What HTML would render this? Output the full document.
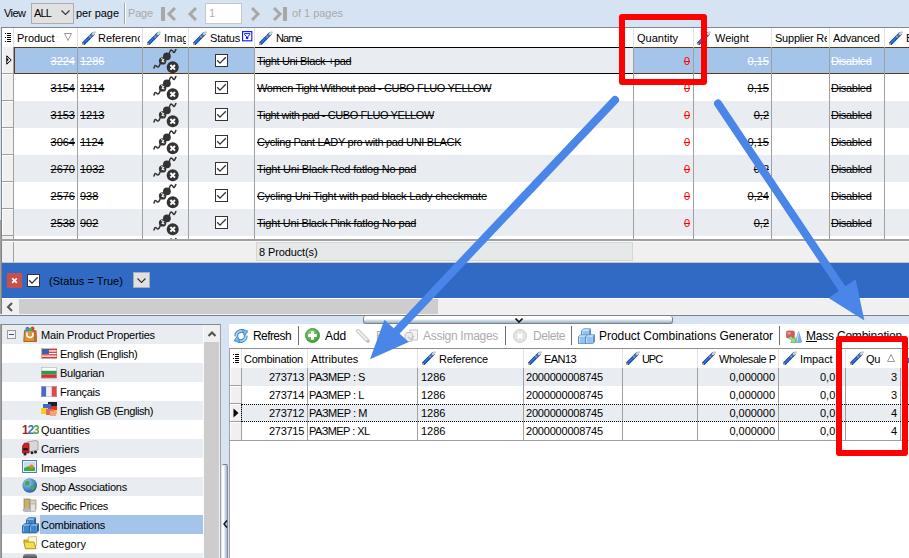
<!DOCTYPE html><html><head><meta charset="utf-8"><style>html,body{margin:0;padding:0;}body{width:909px;height:558px;overflow:hidden;position:relative;background:#fff;font-family:"Liberation Sans",sans-serif;}.a{position:absolute;}.t{font-family:"Liberation Sans",sans-serif;line-height:13px;white-space:nowrap;}</style></head><body><div class="a" style="left:0px;top:0px;width:909px;height:27px;background:#d6e3f2"></div>
<div class="a t" style="top:7px;font-size:11px;color:#000;letter-spacing:-0.535px;left:4px;">View</div>
<div class="a" style="left:31px;top:3px;width:43px;height:21px;background:#e1e1e1;border:1px solid #adadad;box-sizing:border-box"></div>
<div class="a t" style="top:7px;font-size:11px;color:#000;letter-spacing:-0.865px;left:34px;">ALL</div>
<svg class="a" style="left:61px;top:10px;" width="9" height="6" viewBox="0 0 9 6"><path d="M0.5 0.5 L4.5 4.5 L8.5 0.5" fill="none" stroke="#333" stroke-width="1.1"/></svg>
<div class="a t" style="top:7px;font-size:11px;color:#000;letter-spacing:-0.059px;left:76px;">per page</div>
<div class="a" style="left:124px;top:3px;width:1px;height:21px;background:#a8a8a8"></div>
<div class="a" style="left:125px;top:3px;width:1px;height:21px;background:#ffffff"></div>
<div class="a t" style="top:7px;font-size:11px;color:#aaaaaa;letter-spacing:-0.180px;left:128px;">Page</div>
<div class="a" style="left:161px;top:7px;width:4px;height:14px;background:#a8a8a8"></div>
<svg class="a" style="left:166px;top:7px;" width="10" height="14" viewBox="0 0 10 14"><path d="M9 1 L3 7 L9 13" fill="none" stroke="#a8a8a8" stroke-width="3"/></svg>
<svg class="a" style="left:187px;top:7px;" width="10" height="14" viewBox="0 0 10 14"><path d="M9 1 L3 7 L9 13" fill="none" stroke="#a8a8a8" stroke-width="3"/></svg>
<div class="a" style="left:205px;top:3px;width:37px;height:21px;background:#fff;border:1px solid #c8c8c8;box-sizing:border-box"></div>
<div class="a t" style="top:7px;font-size:11px;color:#b0b0b0;left:209px;">1</div>
<svg class="a" style="left:251px;top:7px;" width="10" height="14" viewBox="0 0 10 14"><path d="M1 1 L7 7 L1 13" fill="none" stroke="#a8a8a8" stroke-width="3"/></svg>
<svg class="a" style="left:273px;top:7px;" width="10" height="14" viewBox="0 0 10 14"><path d="M1 1 L7 7 L1 13" fill="none" stroke="#a8a8a8" stroke-width="3"/></svg>
<div class="a" style="left:283px;top:7px;width:4px;height:14px;background:#a8a8a8"></div>
<div class="a t" style="top:7px;font-size:11px;color:#aaaaaa;letter-spacing:-0.044px;left:292px;">of 1 pages</div>
<div class="a" style="left:0px;top:27px;width:909px;height:1px;background:#7f8893"></div>
<div class="a" style="left:1px;top:28px;width:908px;height:211px;background:#fff"></div>
<div class="a" style="left:1px;top:27px;width:1px;height:290px;background:#7d838a"></div>
<div class="a" style="left:0px;top:27px;width:1px;height:193px;background:#d6e3f2"></div>
<div class="a" style="left:0px;top:220px;width:1px;height:338px;background:#a0a0a0"></div>
<div class="a" style="left:13px;top:28px;width:1px;height:19px;background:#e2e2e2"></div>
<div class="a" style="left:77px;top:28px;width:1px;height:19px;background:#e2e2e2"></div>
<div class="a" style="left:142px;top:28px;width:1px;height:19px;background:#e2e2e2"></div>
<div class="a" style="left:188px;top:28px;width:1px;height:19px;background:#e2e2e2"></div>
<div class="a" style="left:254px;top:28px;width:1px;height:19px;background:#e2e2e2"></div>
<div class="a" style="left:633px;top:28px;width:1px;height:19px;background:#e2e2e2"></div>
<div class="a" style="left:693px;top:28px;width:1px;height:19px;background:#e2e2e2"></div>
<div class="a" style="left:771px;top:28px;width:1px;height:19px;background:#e2e2e2"></div>
<div class="a" style="left:829px;top:28px;width:1px;height:19px;background:#e2e2e2"></div>
<div class="a" style="left:884px;top:28px;width:1px;height:19px;background:#e2e2e2"></div>
<div class="a" style="left:2px;top:47px;width:907px;height:27px;background:#e9edf2"></div>
<div class="a" style="left:2px;top:47px;width:11px;height:27px;background:#f0f0f0"></div>
<div class="a" style="left:2px;top:74px;width:907px;height:27px;background:#fff"></div>
<div class="a" style="left:2px;top:74px;width:11px;height:27px;background:#f0f0f0"></div>
<div class="a" style="left:2px;top:101px;width:907px;height:27px;background:#e9edf2"></div>
<div class="a" style="left:2px;top:101px;width:11px;height:27px;background:#f0f0f0"></div>
<div class="a" style="left:2px;top:128px;width:907px;height:27px;background:#fff"></div>
<div class="a" style="left:2px;top:128px;width:11px;height:27px;background:#f0f0f0"></div>
<div class="a" style="left:2px;top:155px;width:907px;height:27px;background:#e9edf2"></div>
<div class="a" style="left:2px;top:155px;width:11px;height:27px;background:#f0f0f0"></div>
<div class="a" style="left:2px;top:182px;width:907px;height:27px;background:#fff"></div>
<div class="a" style="left:2px;top:182px;width:11px;height:27px;background:#f0f0f0"></div>
<div class="a" style="left:2px;top:209px;width:907px;height:27px;background:#e9edf2"></div>
<div class="a" style="left:2px;top:209px;width:11px;height:27px;background:#f0f0f0"></div>
<div class="a" style="left:2px;top:236px;width:907px;height:3px;background:#fff"></div>
<div class="a" style="left:2px;top:236px;width:11px;height:3px;background:#f0f0f0"></div>
<div class="a" style="left:14px;top:47px;width:619px;height:27px;background:#a5c4ea"></div>
<div class="a" style="left:634px;top:47px;width:275px;height:27px;background:#a5c4ea"></div>
<div class="a" style="left:254px;top:47px;width:379px;height:27px;background:#e9edf2"></div>
<div class="a" style="left:14px;top:47px;width:240px;height:1px;background:#5e3c12"></div>
<div class="a" style="left:14px;top:73px;width:240px;height:1px;background:#5e3c12"></div>
<div class="a" style="left:254px;top:47px;width:379px;height:1px;background:#000"></div>
<div class="a" style="left:254px;top:73px;width:379px;height:1px;background:#000"></div>
<div class="a" style="left:634px;top:47px;width:275px;height:1px;background:#5e3c12"></div>
<div class="a" style="left:634px;top:73px;width:275px;height:1px;background:#5e3c12"></div>
<div class="a" style="left:2px;top:47px;width:1px;height:26px;background:#ffffff"></div>
<div class="a" style="left:2px;top:73px;width:11px;height:1px;background:#a0a0a0"></div>
<div class="a" style="left:2px;top:74px;width:11px;height:1px;background:#ffffff"></div>
<div class="a" style="left:2px;top:74px;width:1px;height:26px;background:#ffffff"></div>
<div class="a" style="left:2px;top:100px;width:11px;height:1px;background:#a0a0a0"></div>
<div class="a" style="left:2px;top:101px;width:11px;height:1px;background:#ffffff"></div>
<div class="a" style="left:2px;top:101px;width:1px;height:26px;background:#ffffff"></div>
<div class="a" style="left:2px;top:127px;width:11px;height:1px;background:#a0a0a0"></div>
<div class="a" style="left:2px;top:128px;width:11px;height:1px;background:#ffffff"></div>
<div class="a" style="left:2px;top:128px;width:1px;height:26px;background:#ffffff"></div>
<div class="a" style="left:2px;top:154px;width:11px;height:1px;background:#a0a0a0"></div>
<div class="a" style="left:2px;top:155px;width:11px;height:1px;background:#ffffff"></div>
<div class="a" style="left:2px;top:155px;width:1px;height:26px;background:#ffffff"></div>
<div class="a" style="left:2px;top:181px;width:11px;height:1px;background:#a0a0a0"></div>
<div class="a" style="left:2px;top:182px;width:11px;height:1px;background:#ffffff"></div>
<div class="a" style="left:2px;top:182px;width:1px;height:26px;background:#ffffff"></div>
<div class="a" style="left:2px;top:208px;width:11px;height:1px;background:#a0a0a0"></div>
<div class="a" style="left:2px;top:209px;width:11px;height:1px;background:#ffffff"></div>
<div class="a" style="left:2px;top:209px;width:1px;height:26px;background:#ffffff"></div>
<div class="a" style="left:2px;top:235px;width:11px;height:1px;background:#a0a0a0"></div>
<div class="a" style="left:2px;top:236px;width:11px;height:1px;background:#ffffff"></div>
<div class="a" style="left:2px;top:236px;width:1px;height:3px;background:#ffffff"></div>
<div class="a" style="left:2px;top:236px;width:907px;height:3px;background:#fff"></div>
<div class="a" style="left:2px;top:236px;width:11px;height:3px;background:#f0f0f0"></div>
<div class="a" style="left:13px;top:47px;width:1px;height:192px;background:#a0a0a0"></div>
<div class="a" style="left:77px;top:47px;width:1px;height:192px;background:#a0a0a0"></div>
<div class="a" style="left:142px;top:47px;width:1px;height:192px;background:#a0a0a0"></div>
<div class="a" style="left:188px;top:47px;width:1px;height:192px;background:#a0a0a0"></div>
<div class="a" style="left:254px;top:47px;width:1px;height:192px;background:#a0a0a0"></div>
<div class="a" style="left:633px;top:47px;width:1px;height:192px;background:#a0a0a0"></div>
<div class="a" style="left:693px;top:47px;width:1px;height:192px;background:#a0a0a0"></div>
<div class="a" style="left:771px;top:47px;width:1px;height:192px;background:#a0a0a0"></div>
<div class="a" style="left:829px;top:47px;width:1px;height:192px;background:#a0a0a0"></div>
<div class="a" style="left:884px;top:47px;width:1px;height:192px;background:#a0a0a0"></div>
<div class="a" style="left:14px;top:47px;width:1px;height:27px;background:#5e3c12"></div>
<div class="a" style="left:1px;top:239px;width:908px;height:2px;background:#a0a0a0"></div>
<div class="a" style="left:2px;top:241px;width:907px;height:1px;background:#fafafa"></div>
<div class="a t" style="top:32px;font-size:11px;color:#000;letter-spacing:-0.062px;left:17px;">Product</div>
<div class="a t" style="top:32px;font-size:11px;color:#f8dcb0;left:56px;">:</div>
<svg class="a" style="left:64px;top:33px;" width="8" height="8" viewBox="0 0 8 8"><path d="M0.5 0.5 H7.5 L4 7.5 Z" fill="none" stroke="#9a9a9a" stroke-width="1"/></svg>
<svg class="a" style="left:82px;top:31px;" width="14" height="14" viewBox="0 0 14 14"><path d="M1.8 12.2 L11.2 2.8" stroke="#0a3fa8" stroke-width="3.4" stroke-linecap="round"/><path d="M2.2 11.6 L10.6 3.2" stroke="#2b7ae6" stroke-width="1.6" stroke-linecap="round"/><path d="M7.6 6.2 L8.8 5.0" stroke="#b89060" stroke-width="2.6"/><path d="M11.0 3.0 L12.6 1.4" stroke="#cfcfc8" stroke-width="2.6" stroke-linecap="round"/><circle cx="1.0" cy="13.0" r="1.0" fill="#f0b030"/></svg>
<div class="a t" style="top:32px;font-size:11px;color:#000;left:98px;width:42px;overflow:hidden;">Referenc</div>
<svg class="a" style="left:147px;top:31px;" width="14" height="14" viewBox="0 0 14 14"><path d="M1.8 12.2 L11.2 2.8" stroke="#0a3fa8" stroke-width="3.4" stroke-linecap="round"/><path d="M2.2 11.6 L10.6 3.2" stroke="#2b7ae6" stroke-width="1.6" stroke-linecap="round"/><path d="M7.6 6.2 L8.8 5.0" stroke="#b89060" stroke-width="2.6"/><path d="M11.0 3.0 L12.6 1.4" stroke="#cfcfc8" stroke-width="2.6" stroke-linecap="round"/><circle cx="1.0" cy="13.0" r="1.0" fill="#f0b030"/></svg>
<div class="a t" style="top:32px;font-size:11px;color:#000;left:164px;width:22px;overflow:hidden;">Imag</div>
<svg class="a" style="left:193px;top:31px;" width="14" height="14" viewBox="0 0 14 14"><path d="M1.8 12.2 L11.2 2.8" stroke="#0a3fa8" stroke-width="3.4" stroke-linecap="round"/><path d="M2.2 11.6 L10.6 3.2" stroke="#2b7ae6" stroke-width="1.6" stroke-linecap="round"/><path d="M7.6 6.2 L8.8 5.0" stroke="#b89060" stroke-width="2.6"/><path d="M11.0 3.0 L12.6 1.4" stroke="#cfcfc8" stroke-width="2.6" stroke-linecap="round"/><circle cx="1.0" cy="13.0" r="1.0" fill="#f0b030"/></svg>
<div class="a t" style="top:32px;font-size:11px;color:#000;letter-spacing:-0.203px;left:210px;">Status</div>
<svg class="a" style="left:242px;top:31px;" width="11" height="11" viewBox="0 0 11 11"><rect x="0.6" y="0.6" width="9.2" height="9.2" fill="#fff" stroke="#0a14ff" stroke-width="1.1"/><path d="M2.5 2.6 H7.9 V3.6 L5.9 5.4 V7.6 H4.5 V5.4 L2.5 3.6 Z" fill="none" stroke="#0a14ff" stroke-width="1"/><rect x="4.6" y="6" width="1.3" height="1.8" fill="#0a14ff"/></svg>
<svg class="a" style="left:259px;top:31px;" width="14" height="14" viewBox="0 0 14 14"><path d="M1.8 12.2 L11.2 2.8" stroke="#0a3fa8" stroke-width="3.4" stroke-linecap="round"/><path d="M2.2 11.6 L10.6 3.2" stroke="#2b7ae6" stroke-width="1.6" stroke-linecap="round"/><path d="M7.6 6.2 L8.8 5.0" stroke="#b89060" stroke-width="2.6"/><path d="M11.0 3.0 L12.6 1.4" stroke="#cfcfc8" stroke-width="2.6" stroke-linecap="round"/><circle cx="1.0" cy="13.0" r="1.0" fill="#f0b030"/></svg>
<div class="a t" style="top:32px;font-size:11px;color:#000;letter-spacing:-0.961px;left:276px;">Name</div>
<div class="a t" style="top:32px;font-size:11px;color:#000;left:637px;">Quantity</div>
<svg class="a" style="left:697px;top:31px;" width="14" height="14" viewBox="0 0 14 14"><path d="M1.8 12.2 L11.2 2.8" stroke="#0a3fa8" stroke-width="3.4" stroke-linecap="round"/><path d="M2.2 11.6 L10.6 3.2" stroke="#2b7ae6" stroke-width="1.6" stroke-linecap="round"/><path d="M7.6 6.2 L8.8 5.0" stroke="#b89060" stroke-width="2.6"/><path d="M11.0 3.0 L12.6 1.4" stroke="#cfcfc8" stroke-width="2.6" stroke-linecap="round"/><circle cx="1.0" cy="13.0" r="1.0" fill="#f0b030"/></svg>
<div class="a t" style="top:32px;font-size:11px;color:#000;letter-spacing:-0.058px;left:715px;">Weight</div>
<div class="a t" style="top:32px;font-size:11px;color:#000;letter-spacing:-0.227px;left:775px;width:52px;overflow:hidden;">Supplier Re</div>
<div class="a t" style="top:32px;font-size:11px;color:#000;letter-spacing:-0.309px;left:833px;">Advanced</div>
<svg class="a" style="left:889px;top:31px;" width="14" height="14" viewBox="0 0 14 14"><path d="M1.8 12.2 L11.2 2.8" stroke="#0a3fa8" stroke-width="3.4" stroke-linecap="round"/><path d="M2.2 11.6 L10.6 3.2" stroke="#2b7ae6" stroke-width="1.6" stroke-linecap="round"/><path d="M7.6 6.2 L8.8 5.0" stroke="#b89060" stroke-width="2.6"/><path d="M11.0 3.0 L12.6 1.4" stroke="#cfcfc8" stroke-width="2.6" stroke-linecap="round"/><circle cx="1.0" cy="13.0" r="1.0" fill="#f0b030"/></svg>
<div class="a t" style="top:32px;font-size:11px;color:#000;left:906px;width:3px;overflow:hidden;">B</div>
<svg class="a" style="left:6px;top:55px;" width="7" height="11" viewBox="0 0 7 11"><path d="M0.8 0.8 L5.2 5 L0.8 9.2 Z" fill="none" stroke="#000" stroke-width="1"/><rect x="0.8" y="3.6" width="1.6" height="2" fill="#000"/></svg>
<svg class="a" style="left:5px;top:33px;" width="7" height="10" viewBox="0 0 7 10"><g fill="#000" shape-rendering="crispEdges"><rect x="0" y="0" width="1" height="1"/><rect x="0" y="4" width="1" height="1"/><rect x="0" y="8" width="1" height="1"/><rect x="2" y="0" width="4" height="1"/><rect x="2" y="2" width="4" height="1"/><rect x="2" y="4" width="4" height="1"/><rect x="2" y="6" width="4" height="1"/><rect x="2" y="8" width="4" height="1"/></g></svg>
<div class="a t" style="top:55px;font-size:11px;color:#fff;right:834px;text-align:right;text-decoration:line-through;">3224</div>
<div class="a t" style="top:55px;font-size:11px;color:#fff;left:80px;text-decoration:line-through;">1286</div>
<svg class="a" style="left:150px;top:47px;" width="32" height="27" viewBox="0 0 32 27"><path d="M19.3 6.8 C19.6 4.4 20.6 2.6 21.9 3.3 C23.2 4.0 23.1 5.9 24.3 5.3 C25.3 4.8 25.2 3.3 25.9 2.6" fill="none" stroke="#333" stroke-width="1.5" stroke-linecap="round"/><path d="M10.2 16.8 C9.6 18.6 8.6 20.6 7.3 19.9 C6.2 19.3 6.0 18.0 5.0 18.6 C4.2 19.1 4.6 20.4 4.0 20.9" fill="none" stroke="#333" stroke-width="1.5" stroke-linecap="round"/><circle cx="16.9" cy="9.3" r="3.9" fill="#333"/><circle cx="12.6" cy="13.9" r="3.7" fill="#333"/><path d="M11.2 11.6 L13.6 12.6 L12.2 14.2 L14.4 15.0" fill="none" stroke="#fff" stroke-width="1.1"/><circle cx="22.7" cy="20.3" r="6.0" fill="#333"/><path d="M20.4 18.0 L25.0 22.6 M25.0 18.0 L20.4 22.6" stroke="#fff" stroke-width="2.0"/></svg>
<svg class="a" style="left:215px;top:54px;" width="13" height="13" viewBox="0 0 13 13"><rect x="0.5" y="0.5" width="12" height="12" fill="#fff" stroke="#333"/><path d="M2.2 6.2 L5.0 9.1 L10.8 3.3" fill="none" stroke="#333" stroke-width="1.3"/></svg>
<div class="a t" style="top:55px;font-size:11px;color:#000;letter-spacing:-0.358px;left:257px;text-decoration:line-through;">Tight Uni Black +pad</div>
<div class="a t" style="top:55px;font-size:11px;color:#f00;right:219px;text-align:right;text-decoration:line-through;">0</div>
<div class="a t" style="top:55px;font-size:11px;color:#fff;right:140px;text-align:right;text-decoration:line-through;">0,15</div>
<div class="a t" style="top:55px;font-size:11px;color:#fff;letter-spacing:-0.289px;left:831px;text-decoration:line-through;">Disabled</div>
<div class="a t" style="top:82px;font-size:11px;color:#000;right:834px;text-align:right;text-decoration:line-through;">3154</div>
<div class="a t" style="top:82px;font-size:11px;color:#000;left:80px;text-decoration:line-through;">1214</div>
<svg class="a" style="left:150px;top:74px;" width="32" height="27" viewBox="0 0 32 27"><path d="M19.3 6.8 C19.6 4.4 20.6 2.6 21.9 3.3 C23.2 4.0 23.1 5.9 24.3 5.3 C25.3 4.8 25.2 3.3 25.9 2.6" fill="none" stroke="#333" stroke-width="1.5" stroke-linecap="round"/><path d="M10.2 16.8 C9.6 18.6 8.6 20.6 7.3 19.9 C6.2 19.3 6.0 18.0 5.0 18.6 C4.2 19.1 4.6 20.4 4.0 20.9" fill="none" stroke="#333" stroke-width="1.5" stroke-linecap="round"/><circle cx="16.9" cy="9.3" r="3.9" fill="#333"/><circle cx="12.6" cy="13.9" r="3.7" fill="#333"/><path d="M11.2 11.6 L13.6 12.6 L12.2 14.2 L14.4 15.0" fill="none" stroke="#fff" stroke-width="1.1"/><circle cx="22.7" cy="20.3" r="6.0" fill="#333"/><path d="M20.4 18.0 L25.0 22.6 M25.0 18.0 L20.4 22.6" stroke="#fff" stroke-width="2.0"/></svg>
<svg class="a" style="left:215px;top:81px;" width="13" height="13" viewBox="0 0 13 13"><rect x="0.5" y="0.5" width="12" height="12" fill="#fff" stroke="#333"/><path d="M2.2 6.2 L5.0 9.1 L10.8 3.3" fill="none" stroke="#333" stroke-width="1.3"/></svg>
<div class="a t" style="top:82px;font-size:11px;color:#000;letter-spacing:-0.353px;left:257px;text-decoration:line-through;">Women Tight Without pad - CUBO FLUO YELLOW</div>
<div class="a t" style="top:82px;font-size:11px;color:#f00;right:219px;text-align:right;text-decoration:line-through;">0</div>
<div class="a t" style="top:82px;font-size:11px;color:#000;right:140px;text-align:right;text-decoration:line-through;">0,15</div>
<div class="a t" style="top:82px;font-size:11px;color:#000;letter-spacing:-0.289px;left:831px;text-decoration:line-through;">Disabled</div>
<div class="a t" style="top:109px;font-size:11px;color:#000;right:834px;text-align:right;text-decoration:line-through;">3153</div>
<div class="a t" style="top:109px;font-size:11px;color:#000;left:80px;text-decoration:line-through;">1213</div>
<svg class="a" style="left:150px;top:101px;" width="32" height="27" viewBox="0 0 32 27"><path d="M19.3 6.8 C19.6 4.4 20.6 2.6 21.9 3.3 C23.2 4.0 23.1 5.9 24.3 5.3 C25.3 4.8 25.2 3.3 25.9 2.6" fill="none" stroke="#333" stroke-width="1.5" stroke-linecap="round"/><path d="M10.2 16.8 C9.6 18.6 8.6 20.6 7.3 19.9 C6.2 19.3 6.0 18.0 5.0 18.6 C4.2 19.1 4.6 20.4 4.0 20.9" fill="none" stroke="#333" stroke-width="1.5" stroke-linecap="round"/><circle cx="16.9" cy="9.3" r="3.9" fill="#333"/><circle cx="12.6" cy="13.9" r="3.7" fill="#333"/><path d="M11.2 11.6 L13.6 12.6 L12.2 14.2 L14.4 15.0" fill="none" stroke="#fff" stroke-width="1.1"/><circle cx="22.7" cy="20.3" r="6.0" fill="#333"/><path d="M20.4 18.0 L25.0 22.6 M25.0 18.0 L20.4 22.6" stroke="#fff" stroke-width="2.0"/></svg>
<svg class="a" style="left:215px;top:108px;" width="13" height="13" viewBox="0 0 13 13"><rect x="0.5" y="0.5" width="12" height="12" fill="#fff" stroke="#333"/><path d="M2.2 6.2 L5.0 9.1 L10.8 3.3" fill="none" stroke="#333" stroke-width="1.3"/></svg>
<div class="a t" style="top:109px;font-size:11px;color:#000;letter-spacing:-0.419px;left:257px;text-decoration:line-through;">Tight with pad - CUBO FLUO YELLOW</div>
<div class="a t" style="top:109px;font-size:11px;color:#f00;right:219px;text-align:right;text-decoration:line-through;">0</div>
<div class="a t" style="top:109px;font-size:11px;color:#000;right:140px;text-align:right;text-decoration:line-through;">0,2</div>
<div class="a t" style="top:109px;font-size:11px;color:#000;letter-spacing:-0.289px;left:831px;text-decoration:line-through;">Disabled</div>
<div class="a t" style="top:136px;font-size:11px;color:#000;right:834px;text-align:right;text-decoration:line-through;">3064</div>
<div class="a t" style="top:136px;font-size:11px;color:#000;left:80px;text-decoration:line-through;">1124</div>
<svg class="a" style="left:150px;top:128px;" width="32" height="27" viewBox="0 0 32 27"><path d="M19.3 6.8 C19.6 4.4 20.6 2.6 21.9 3.3 C23.2 4.0 23.1 5.9 24.3 5.3 C25.3 4.8 25.2 3.3 25.9 2.6" fill="none" stroke="#333" stroke-width="1.5" stroke-linecap="round"/><path d="M10.2 16.8 C9.6 18.6 8.6 20.6 7.3 19.9 C6.2 19.3 6.0 18.0 5.0 18.6 C4.2 19.1 4.6 20.4 4.0 20.9" fill="none" stroke="#333" stroke-width="1.5" stroke-linecap="round"/><circle cx="16.9" cy="9.3" r="3.9" fill="#333"/><circle cx="12.6" cy="13.9" r="3.7" fill="#333"/><path d="M11.2 11.6 L13.6 12.6 L12.2 14.2 L14.4 15.0" fill="none" stroke="#fff" stroke-width="1.1"/><circle cx="22.7" cy="20.3" r="6.0" fill="#333"/><path d="M20.4 18.0 L25.0 22.6 M25.0 18.0 L20.4 22.6" stroke="#fff" stroke-width="2.0"/></svg>
<svg class="a" style="left:215px;top:135px;" width="13" height="13" viewBox="0 0 13 13"><rect x="0.5" y="0.5" width="12" height="12" fill="#fff" stroke="#333"/><path d="M2.2 6.2 L5.0 9.1 L10.8 3.3" fill="none" stroke="#333" stroke-width="1.3"/></svg>
<div class="a t" style="top:136px;font-size:11px;color:#000;letter-spacing:-0.332px;left:257px;text-decoration:line-through;">Cycling Pant LADY pro with pad UNI BLACK</div>
<div class="a t" style="top:136px;font-size:11px;color:#f00;right:219px;text-align:right;text-decoration:line-through;">0</div>
<div class="a t" style="top:136px;font-size:11px;color:#000;right:140px;text-align:right;text-decoration:line-through;">0,15</div>
<div class="a t" style="top:136px;font-size:11px;color:#000;letter-spacing:-0.289px;left:831px;text-decoration:line-through;">Disabled</div>
<div class="a t" style="top:163px;font-size:11px;color:#000;right:834px;text-align:right;text-decoration:line-through;">2670</div>
<div class="a t" style="top:163px;font-size:11px;color:#000;left:80px;text-decoration:line-through;">1032</div>
<svg class="a" style="left:150px;top:155px;" width="32" height="27" viewBox="0 0 32 27"><path d="M19.3 6.8 C19.6 4.4 20.6 2.6 21.9 3.3 C23.2 4.0 23.1 5.9 24.3 5.3 C25.3 4.8 25.2 3.3 25.9 2.6" fill="none" stroke="#333" stroke-width="1.5" stroke-linecap="round"/><path d="M10.2 16.8 C9.6 18.6 8.6 20.6 7.3 19.9 C6.2 19.3 6.0 18.0 5.0 18.6 C4.2 19.1 4.6 20.4 4.0 20.9" fill="none" stroke="#333" stroke-width="1.5" stroke-linecap="round"/><circle cx="16.9" cy="9.3" r="3.9" fill="#333"/><circle cx="12.6" cy="13.9" r="3.7" fill="#333"/><path d="M11.2 11.6 L13.6 12.6 L12.2 14.2 L14.4 15.0" fill="none" stroke="#fff" stroke-width="1.1"/><circle cx="22.7" cy="20.3" r="6.0" fill="#333"/><path d="M20.4 18.0 L25.0 22.6 M25.0 18.0 L20.4 22.6" stroke="#fff" stroke-width="2.0"/></svg>
<svg class="a" style="left:215px;top:162px;" width="13" height="13" viewBox="0 0 13 13"><rect x="0.5" y="0.5" width="12" height="12" fill="#fff" stroke="#333"/><path d="M2.2 6.2 L5.0 9.1 L10.8 3.3" fill="none" stroke="#333" stroke-width="1.3"/></svg>
<div class="a t" style="top:163px;font-size:11px;color:#000;letter-spacing:-0.185px;left:257px;text-decoration:line-through;">Tight Uni Black Red fatlog No pad</div>
<div class="a t" style="top:163px;font-size:11px;color:#f00;right:219px;text-align:right;text-decoration:line-through;">0</div>
<div class="a t" style="top:163px;font-size:11px;color:#000;right:140px;text-align:right;text-decoration:line-through;">0,2</div>
<div class="a t" style="top:163px;font-size:11px;color:#000;letter-spacing:-0.289px;left:831px;text-decoration:line-through;">Disabled</div>
<div class="a t" style="top:190px;font-size:11px;color:#000;right:834px;text-align:right;text-decoration:line-through;">2576</div>
<div class="a t" style="top:190px;font-size:11px;color:#000;left:80px;text-decoration:line-through;">938</div>
<svg class="a" style="left:150px;top:182px;" width="32" height="27" viewBox="0 0 32 27"><path d="M19.3 6.8 C19.6 4.4 20.6 2.6 21.9 3.3 C23.2 4.0 23.1 5.9 24.3 5.3 C25.3 4.8 25.2 3.3 25.9 2.6" fill="none" stroke="#333" stroke-width="1.5" stroke-linecap="round"/><path d="M10.2 16.8 C9.6 18.6 8.6 20.6 7.3 19.9 C6.2 19.3 6.0 18.0 5.0 18.6 C4.2 19.1 4.6 20.4 4.0 20.9" fill="none" stroke="#333" stroke-width="1.5" stroke-linecap="round"/><circle cx="16.9" cy="9.3" r="3.9" fill="#333"/><circle cx="12.6" cy="13.9" r="3.7" fill="#333"/><path d="M11.2 11.6 L13.6 12.6 L12.2 14.2 L14.4 15.0" fill="none" stroke="#fff" stroke-width="1.1"/><circle cx="22.7" cy="20.3" r="6.0" fill="#333"/><path d="M20.4 18.0 L25.0 22.6 M25.0 18.0 L20.4 22.6" stroke="#fff" stroke-width="2.0"/></svg>
<svg class="a" style="left:215px;top:189px;" width="13" height="13" viewBox="0 0 13 13"><rect x="0.5" y="0.5" width="12" height="12" fill="#fff" stroke="#333"/><path d="M2.2 6.2 L5.0 9.1 L10.8 3.3" fill="none" stroke="#333" stroke-width="1.3"/></svg>
<div class="a t" style="top:190px;font-size:11px;color:#000;letter-spacing:-0.183px;left:257px;text-decoration:line-through;">Cycling Uni Tight with pad black Lady checkmate</div>
<div class="a t" style="top:190px;font-size:11px;color:#f00;right:219px;text-align:right;text-decoration:line-through;">0</div>
<div class="a t" style="top:190px;font-size:11px;color:#000;right:140px;text-align:right;text-decoration:line-through;">0,24</div>
<div class="a t" style="top:190px;font-size:11px;color:#000;letter-spacing:-0.289px;left:831px;text-decoration:line-through;">Disabled</div>
<div class="a t" style="top:217px;font-size:11px;color:#000;right:834px;text-align:right;text-decoration:line-through;">2538</div>
<div class="a t" style="top:217px;font-size:11px;color:#000;left:80px;text-decoration:line-through;">902</div>
<svg class="a" style="left:150px;top:209px;" width="32" height="27" viewBox="0 0 32 27"><path d="M19.3 6.8 C19.6 4.4 20.6 2.6 21.9 3.3 C23.2 4.0 23.1 5.9 24.3 5.3 C25.3 4.8 25.2 3.3 25.9 2.6" fill="none" stroke="#333" stroke-width="1.5" stroke-linecap="round"/><path d="M10.2 16.8 C9.6 18.6 8.6 20.6 7.3 19.9 C6.2 19.3 6.0 18.0 5.0 18.6 C4.2 19.1 4.6 20.4 4.0 20.9" fill="none" stroke="#333" stroke-width="1.5" stroke-linecap="round"/><circle cx="16.9" cy="9.3" r="3.9" fill="#333"/><circle cx="12.6" cy="13.9" r="3.7" fill="#333"/><path d="M11.2 11.6 L13.6 12.6 L12.2 14.2 L14.4 15.0" fill="none" stroke="#fff" stroke-width="1.1"/><circle cx="22.7" cy="20.3" r="6.0" fill="#333"/><path d="M20.4 18.0 L25.0 22.6 M25.0 18.0 L20.4 22.6" stroke="#fff" stroke-width="2.0"/></svg>
<svg class="a" style="left:215px;top:216px;" width="13" height="13" viewBox="0 0 13 13"><rect x="0.5" y="0.5" width="12" height="12" fill="#fff" stroke="#333"/><path d="M2.2 6.2 L5.0 9.1 L10.8 3.3" fill="none" stroke="#333" stroke-width="1.3"/></svg>
<div class="a t" style="top:217px;font-size:11px;color:#000;letter-spacing:-0.215px;left:257px;text-decoration:line-through;">Tight Uni Black Pink fatlog No pad</div>
<div class="a t" style="top:217px;font-size:11px;color:#f00;right:219px;text-align:right;text-decoration:line-through;">0</div>
<div class="a t" style="top:217px;font-size:11px;color:#000;right:140px;text-align:right;text-decoration:line-through;">0,2</div>
<div class="a t" style="top:217px;font-size:11px;color:#000;letter-spacing:-0.289px;left:831px;text-decoration:line-through;">Disabled</div>
<svg class="a" style="left:150px;top:236px;" width="32" height="3" viewBox="0 0 32 3"><path d="M19.3 6.8 C19.6 4.4 20.6 2.6 21.9 3.3 C23.2 4.0 23.1 5.9 24.3 5.3 C25.3 4.8 25.2 3.3 25.9 2.6" fill="none" stroke="#333" stroke-width="1.5" stroke-linecap="round"/><path d="M10.2 16.8 C9.6 18.6 8.6 20.6 7.3 19.9 C6.2 19.3 6.0 18.0 5.0 18.6 C4.2 19.1 4.6 20.4 4.0 20.9" fill="none" stroke="#333" stroke-width="1.5" stroke-linecap="round"/><circle cx="16.9" cy="9.3" r="3.9" fill="#333"/><circle cx="12.6" cy="13.9" r="3.7" fill="#333"/><path d="M11.2 11.6 L13.6 12.6 L12.2 14.2 L14.4 15.0" fill="none" stroke="#fff" stroke-width="1.1"/><circle cx="22.7" cy="20.3" r="6.0" fill="#333"/><path d="M20.4 18.0 L25.0 22.6 M25.0 18.0 L20.4 22.6" stroke="#fff" stroke-width="2.0"/></svg>
<div class="a" style="left:2px;top:242px;width:907px;height:20px;background:#f0f0f0"></div>
<div class="a" style="left:13px;top:242px;width:1px;height:20px;background:#a0a0a0"></div>
<div class="a" style="left:256px;top:242px;width:377px;height:19px;background:#e5e9ea;border:1px solid #d6d6d6;box-sizing:border-box"></div>
<div class="a t" style="top:246px;font-size:11px;color:#000;letter-spacing:-0.120px;left:259px;">8 Product(s)</div>
<div class="a" style="left:2px;top:262px;width:907px;height:1px;background:#cdc6be"></div>
<div class="a" style="left:2px;top:263px;width:907px;height:35px;background:#316ac5"></div>
<div class="a" style="left:7px;top:273px;width:15px;height:15px;background:#c84f4b"></div>
<svg class="a" style="left:7px;top:273px;" width="15" height="15" viewBox="0 0 15 15"><path d="M5.2 5.3 L9.8 9.9 M9.8 5.3 L5.2 9.9" stroke="#fff" stroke-width="1.7"/></svg>
<svg class="a" style="left:27px;top:274px;" width="13" height="13" viewBox="0 0 13 13"><rect x="0.5" y="0.5" width="12" height="12" fill="#fff" stroke="#333"/><path d="M2.2 6.2 L5.0 9.1 L10.8 3.3" fill="none" stroke="#333" stroke-width="1.3"/></svg>
<div class="a t" style="top:275px;font-size:11px;color:#000;letter-spacing:0.060px;left:49px;">(Status = True)</div>
<div class="a" style="left:133px;top:272px;width:17px;height:16px;background:#e1e1e1;border:1px solid #adadad;box-sizing:border-box"></div>
<svg class="a" style="left:137px;top:278px;" width="9" height="5" viewBox="0 0 9 5"><path d="M0.5 0.5 L4.5 4.5 L8.5 0.5" fill="none" stroke="#333" stroke-width="1.1"/></svg>
<div class="a" style="left:2px;top:298px;width:907px;height:1px;background:#fff"></div>
<div class="a" style="left:2px;top:299px;width:907px;height:15px;background:#f0f0f0"></div>
<div class="a" style="left:19px;top:299px;width:419px;height:15px;background:#cdcdcd"></div>
<div class="a" style="left:0px;top:314px;width:909px;height:1px;background:#f4f4f4"></div>
<svg class="a" style="left:6px;top:302px;" width="8" height="10" viewBox="0 0 8 10"><path d="M6 1 L2 5 L6 9" fill="none" stroke="#555" stroke-width="2"/></svg>
<div class="a" style="left:0px;top:315px;width:909px;height:1px;background:#7c8088"></div>
<div class="a" style="left:0px;top:316px;width:909px;height:1px;background:#a8adb4"></div>
<div class="a" style="left:0px;top:316px;width:909px;height:8px;background:#d6e3f2"></div>
<div class="a" style="left:363px;top:316px;width:310px;height:8px;background:linear-gradient(#ffffff 0,#ffffff 45%,#d8eaf4 55%,#9cb2c2 100%);border:1px solid #808080;border-top:none;box-sizing:border-box;border-radius:3px"></div>
<svg class="a" style="left:515px;top:318px;" width="8" height="5" viewBox="0 0 8 5"><path d="M0.5 0.5 L4 4 L7.5 0.5" fill="none" stroke="#111" stroke-width="1.6"/></svg>
<div class="a" style="left:1px;top:324px;width:220px;height:234px;background:#fff;border-left:1px solid #8a8a8a;border-top:1px solid #8a8a8a;box-sizing:border-box"></div>
<div class="a" style="left:2px;top:325px;width:201px;height:19px;background:#e9edf2"></div>
<svg class="a" style="left:23px;top:326px;" width="15" height="17" viewBox="0 0 15 17"><path d="M1.5 4.5 L12.5 4.5 L13.5 15.5 L0.8 15.5 Z" fill="#d8953e" stroke="#9a5a1a" stroke-width="0.9"/><path d="M9.5 4.5 L13.5 4.5 L14 15.5 L11.5 15.5 Z" fill="#b87028"/><circle cx="4.5" cy="3" r="2.2" fill="#3a8ad8"/><circle cx="9.5" cy="2.6" r="2" fill="#d84040"/><rect x="6" y="2" width="3" height="3" fill="#48b040"/><path d="M4 6.5 V10 Q7 13 10 10 V6.5" fill="none" stroke="#fff" stroke-width="1.5"/></svg>
<div class="a t" style="top:329px;font-size:11px;color:#000;letter-spacing:-0.177px;left:41px;">Main Product Properties</div>
<div class="a" style="left:2px;top:344px;width:201px;height:19px;background:#fff"></div>
<svg class="a" style="left:41px;top:348px;" width="16" height="12" viewBox="0 0 16 12"><rect x="0.5" y="0.5" width="15" height="10" fill="#fff" stroke="#c9a0a0" stroke-width="0.8"/><g fill="#d43838"><rect x="1" y="1" width="15" height="1.3"/><rect x="1" y="3.6" width="15" height="1.3"/><rect x="1" y="6.2" width="15" height="1.3"/><rect x="1" y="8.8" width="15" height="1.3"/></g><rect x="1" y="1" width="7" height="5" fill="#3d5fb0"/></svg>
<div class="a t" style="top:348px;font-size:11px;color:#000;letter-spacing:-0.298px;left:60px;">English (English)</div>
<div class="a" style="left:2px;top:363px;width:201px;height:19px;background:#e9edf2"></div>
<svg class="a" style="left:41px;top:367px;" width="16" height="12" viewBox="0 0 16 12"><rect x="0" y="0" width="16" height="3.8" fill="#fafafa"/><rect x="0" y="3.8" width="16" height="3.8" fill="#2e9a4a"/><rect x="0" y="7.6" width="16" height="3.6" fill="#d83030"/><rect x="0.5" y="0.5" width="15" height="10.5" fill="none" stroke="#b0b0b0" stroke-width="0.6"/></svg>
<div class="a t" style="top:367px;font-size:11px;color:#000;letter-spacing:-0.278px;left:60px;">Bulgarian</div>
<div class="a" style="left:2px;top:382px;width:201px;height:19px;background:#fff"></div>
<svg class="a" style="left:41px;top:386px;" width="16" height="12" viewBox="0 0 16 12"><rect x="0" y="0" width="5.3" height="11" fill="#4a68c8"/><rect x="5.3" y="0" width="5.4" height="11" fill="#f0f0f0"/><rect x="10.7" y="0" width="5.3" height="11" fill="#e04848"/><rect x="0.5" y="0.5" width="15" height="10" fill="none" stroke="#b8b8c8" stroke-width="0.6"/></svg>
<div class="a t" style="top:386px;font-size:11px;color:#000;letter-spacing:-0.273px;left:60px;">Français</div>
<div class="a" style="left:2px;top:401px;width:201px;height:19px;background:#e9edf2"></div>
<svg class="a" style="left:41px;top:402px;" width="16" height="15" viewBox="0 0 16 15"><rect x="7" y="0" width="9" height="4" fill="#202020"/><rect x="7" y="4" width="9" height="4" fill="#e03030"/><rect x="7" y="8" width="9" height="4" fill="#f0c020"/><rect x="2" y="2" width="8" height="6" fill="#3a6ad0"/><rect x="0" y="6" width="7" height="6" fill="#f0d020"/><rect x="5" y="7" width="8" height="6" fill="#e86a4a"/><rect x="9" y="9" width="6" height="5" fill="#f4a080"/></svg>
<div class="a t" style="top:405px;font-size:11px;color:#000;letter-spacing:-0.427px;left:60px;">English GB (English)</div>
<div class="a" style="left:2px;top:420px;width:201px;height:19px;background:#fff"></div>
<svg class="a" style="left:22px;top:424px;" width="17" height="12" viewBox="0 0 17 12"><text x="0" y="9.5" font-family="Liberation Sans" font-weight="bold" font-size="12" letter-spacing="-1.2"><tspan fill="#a81c1c">1</tspan><tspan fill="#3a78b8">2</tspan><tspan fill="#5aa040">3</tspan></text></svg>
<div class="a t" style="top:424px;font-size:11px;color:#000;letter-spacing:-0.056px;left:41px;">Quantities</div>
<div class="a" style="left:2px;top:439px;width:201px;height:19px;background:#e9edf2"></div>
<svg class="a" style="left:22px;top:440px;" width="17" height="17" viewBox="0 0 17 17"><path d="M5 2 L14 0.5 L16 1.5 V10 L6 12 Z" fill="#d8d8dc" stroke="#8a8a90" stroke-width="0.7"/><path d="M0.5 6 L2.5 3 L7 3.5 L7 13 L0.5 13 Z" fill="#d02020" stroke="#801010" stroke-width="0.7"/><rect x="1.2" y="8" width="4.6" height="2.5" fill="#301818"/><circle cx="3" cy="14" r="1.6" fill="#222"/><circle cx="10" cy="12.8" r="1.5" fill="#222"/><circle cx="13.5" cy="12" r="1.5" fill="#222"/></svg>
<div class="a t" style="top:443px;font-size:11px;color:#000;letter-spacing:-0.137px;left:41px;">Carriers</div>
<div class="a" style="left:2px;top:458px;width:201px;height:19px;background:#fff"></div>
<svg class="a" style="left:22px;top:460px;" width="15" height="14" viewBox="0 0 15 14"><rect x="0.5" y="0.5" width="14" height="12" fill="#e8eef8" stroke="#5a7ab0" stroke-width="1"/><rect x="2" y="2" width="11" height="9" fill="#c8dcf0"/><path d="M2 8 Q7 5 13 7.5 V11 H2 Z" fill="#3eaa3e"/><circle cx="9.5" cy="6.5" r="2" fill="#f08020"/></svg>
<div class="a t" style="top:462px;font-size:11px;color:#000;letter-spacing:-0.182px;left:41px;">Images</div>
<div class="a" style="left:2px;top:477px;width:201px;height:19px;background:#e9edf2"></div>
<svg class="a" style="left:22px;top:478px;" width="16" height="16" viewBox="0 0 16 16"><defs><radialGradient id="ggl" cx="0.35" cy="0.3" r="0.75"><stop offset="0" stop-color="#9ad0f8"/><stop offset="1" stop-color="#1e5ca8"/></radialGradient></defs><circle cx="7.7" cy="7.5" r="7.3" fill="url(#ggl)"/><path d="M3 4 Q5 2 7 3 L8 6 L5 8 L3 7 Z M9 8 L12 7 L13 10 L10 13 L9 11 Z M10 2 L12 3 L11 4 Z" fill="#48a848"/></svg>
<div class="a t" style="top:481px;font-size:11px;color:#000;letter-spacing:-0.233px;left:41px;">Shop Associations</div>
<div class="a" style="left:2px;top:496px;width:201px;height:19px;background:#fff"></div>
<svg class="a" style="left:22px;top:498px;" width="15" height="16" viewBox="0 0 15 16"><rect x="2" y="1" width="6" height="10" fill="#c8b070" stroke="#8a7a50" stroke-width="0.7"/><rect x="8" y="2" width="6" height="9" fill="#d8d0b8" stroke="#9a9080" stroke-width="0.7"/><ellipse cx="5" cy="12" rx="4.5" ry="2" fill="#b8b8b8"/><rect x="8.5" y="6" width="5" height="7.5" fill="#e4e4e4" stroke="#a0a0a0" stroke-width="0.6"/></svg>
<div class="a t" style="top:500px;font-size:11px;color:#000;letter-spacing:-0.344px;left:41px;">Specific Prices</div>
<div class="a" style="left:2px;top:515px;width:201px;height:19px;background:#e9edf2"></div>
<div class="a" style="left:40px;top:515px;width:163px;height:19px;background:#a5c4ea"></div>
<svg class="a" style="left:22px;top:517px;" width="17" height="17" viewBox="0 0 17 17"><path d="M4.5 2.8 L6.5 0.8 H13.5 L11.5 2.8 Z" fill="#8cc4f0"/><path d="M11.5 2.8 L13.5 0.8 V7.8 L11.5 9.8 Z" fill="#1f5fa8"/><rect x="4.5" y="2.8" width="7" height="7" fill="#3c84cc"/><path d="M4.5 2.8 L6.5 0.8 H13.5 V7.8 L11.5 9.8 H4.5 Z" fill="none" stroke="#1d4f8a" stroke-width="0.8"/><path d="M5.5 3.8 V8.8" stroke="#7cb8ec" stroke-width="1"/><path d="M0.5 8.8 L2.5 6.8 H9.5 L7.5 8.8 Z" fill="#8cc4f0"/><path d="M7.5 8.8 L9.5 6.8 V13.8 L7.5 15.8 Z" fill="#1f5fa8"/><rect x="0.5" y="8.8" width="7" height="7" fill="#3c84cc"/><path d="M0.5 8.8 L2.5 6.8 H9.5 V13.8 L7.5 15.8 H0.5 Z" fill="none" stroke="#1d4f8a" stroke-width="0.8"/><path d="M1.5 9.8 V14.8" stroke="#7cb8ec" stroke-width="1"/><path d="M7.5 8.8 L9.5 6.8 H16.5 L14.5 8.8 Z" fill="#8cc4f0"/><path d="M14.5 8.8 L16.5 6.8 V13.8 L14.5 15.8 Z" fill="#1f5fa8"/><rect x="7.5" y="8.8" width="7" height="7" fill="#3c84cc"/><path d="M7.5 8.8 L9.5 6.8 H16.5 V13.8 L14.5 15.8 H7.5 Z" fill="none" stroke="#1d4f8a" stroke-width="0.8"/><path d="M8.5 9.8 V14.8" stroke="#7cb8ec" stroke-width="1"/></svg>
<div class="a t" style="top:519px;font-size:11px;color:#000;letter-spacing:-0.273px;left:41px;">Combinations</div>
<div class="a" style="left:2px;top:534px;width:201px;height:19px;background:#fff"></div>
<svg class="a" style="left:23px;top:536px;" width="14" height="15" viewBox="0 0 14 15"><path d="M0.8 4 H5 L6.5 2.5 H12.5 L12.5 12.5 H2.5 Z" fill="#e8c830" stroke="#a88a10" stroke-width="0.8"/><path d="M5 1 L13.5 0.5 L13.5 9.5 L6 10 Z" fill="#fff8d8" stroke="#b8a040" stroke-width="0.6"/><path d="M0.8 6 H11 L13 12.8 H2.5 Z" fill="#f4dc50" stroke="#a88a10" stroke-width="0.8"/></svg>
<div class="a t" style="top:538px;font-size:11px;color:#000;letter-spacing:0.043px;left:41px;">Category</div>
<div class="a" style="left:2px;top:553px;width:201px;height:19px;background:#e9edf2"></div>
<svg class="a" style="left:7px;top:330px;" width="9" height="9" viewBox="0 0 9 9"><rect x="0.5" y="0.5" width="8" height="8" fill="#f4f4f4" stroke="#9a9a9a"/><path d="M2 4.5 H7" stroke="#3050a0" stroke-width="1"/></svg>
<div class="a" style="left:23px;top:554px;width:14px;height:4px;background:linear-gradient(#909090,#505050);border-radius:3px 3px 0 0"></div>
<div class="a" style="left:203px;top:325px;width:17px;height:233px;background:#f0f0f0"></div>
<div class="a" style="left:203px;top:325px;width:1px;height:233px;background:#fafafa"></div>
<div class="a" style="left:204px;top:342px;width:15px;height:216px;background:#cdcdcd"></div>
<svg class="a" style="left:207px;top:330px;" width="10" height="8" viewBox="0 0 10 8"><path d="M1.5 6 L5 2.5 L8.5 6" fill="none" stroke="#555" stroke-width="2.2"/></svg>
<div class="a" style="left:220px;top:324px;width:1px;height:234px;background:#a0a0a0"></div>
<div class="a" style="left:221px;top:324px;width:8px;height:234px;background:#d6e3f2"></div>
<div class="a" style="left:222px;top:464px;width:6px;height:94px;background:linear-gradient(90deg,#ffffff 0,#ffffff 30%,#dce9f2 50%,#9fb4c4 100%);border-top:1px solid #7a7a7a;border-right:1px solid #8090a0;box-sizing:border-box;border-radius:2px 2px 0 0"></div>
<svg class="a" style="left:223px;top:520px;" width="5" height="8" viewBox="0 0 5 8"><path d="M4 0.5 L1 4 L4 7.5" fill="none" stroke="#111" stroke-width="1.4"/></svg>
<div class="a" style="left:229px;top:324px;width:680px;height:234px;background:#fff"></div>
<div class="a" style="left:229px;top:348px;width:1px;height:210px;background:#a0a0a0"></div>
<svg class="a" style="left:234px;top:329px;" width="14" height="14" viewBox="0 0 14 14"><path d="M2.2 7.2 A5 5 0 0 1 10.2 3.0" fill="none" stroke="#3b7fc8" stroke-width="3.6"/><path d="M2.2 7.2 A5 5 0 0 1 10.2 3.0" fill="none" stroke="#a6d3f7" stroke-width="1.8"/><path d="M8.2 0.2 L14 2.2 L10.4 7.2 Z" fill="#7ab8ee" stroke="#3b7fc8" stroke-width="0.8" stroke-linejoin="round"/><path d="M11.8 6.8 A5 5 0 0 1 3.8 11.0" fill="none" stroke="#3b7fc8" stroke-width="3.6"/><path d="M11.8 6.8 A5 5 0 0 1 3.8 11.0" fill="none" stroke="#a6d3f7" stroke-width="1.8"/><path d="M5.8 13.8 L0 11.8 L3.6 6.8 Z" fill="#7ab8ee" stroke="#3b7fc8" stroke-width="0.8" stroke-linejoin="round"/></svg>
<svg class="a" style="left:305px;top:328px;" width="15" height="15" viewBox="0 0 15 15"><defs><radialGradient id="gadd" cx="0.4" cy="0.35" r="0.7"><stop offset="0" stop-color="#8fd878"/><stop offset="1" stop-color="#2f9a2f"/></radialGradient></defs><circle cx="7.5" cy="7.5" r="7" fill="url(#gadd)" stroke="#3a8a3a" stroke-width="0.8"/><path d="M7.5 3.2 V11.8 M3.2 7.5 H11.8" stroke="#fff" stroke-width="3"/></svg>
<svg class="a" style="left:356px;top:329px;" width="14" height="14" viewBox="0 0 14 14"><path d="M2 2 L11 11" stroke="#c8c8c8" stroke-width="4" stroke-linecap="round"/><path d="M2 2 L11 11" stroke="#ececec" stroke-width="2.4" stroke-linecap="round"/><circle cx="12.2" cy="12.2" r="1.6" fill="#c0c0c0"/></svg>
<svg class="a" style="left:404px;top:329px;" width="14" height="14" viewBox="0 0 14 14"><rect x="6" y="1" width="7.5" height="10" fill="#f4f4f4" stroke="#c8c8c8" stroke-width="1"/><rect x="1" y="3.5" width="7.5" height="9" rx="2" fill="#ececec" stroke="#c0c0c0" stroke-width="1"/><path d="M4 8 L7 10.5 L10 7" fill="none" stroke="#c4c4c4" stroke-width="1.3"/></svg>
<svg class="a" style="left:513px;top:329px;" width="14" height="14" viewBox="0 0 14 14"><circle cx="7" cy="7" r="6.5" fill="#e4e4e4" stroke="#c8c8c8" stroke-width="0.8"/><path d="M4.6 4.6 L9.4 9.4 M9.4 4.6 L4.6 9.4" stroke="#fff" stroke-width="2.2"/></svg>
<svg class="a" style="left:578px;top:328px;" width="17" height="16" viewBox="0 0 17 16"><path d="M3.5 2.8 L5.5 0.8 H12.5 L10.5 2.8 Z" fill="#d4ebfc"/><path d="M10.5 2.8 L12.5 0.8 V7.8 L10.5 9.8 Z" fill="#5f95c9"/><rect x="3.5" y="2.8" width="7" height="7" fill="#92c3ee"/><path d="M3.5 2.8 L5.5 0.8 H12.5 V7.8 L10.5 9.8 H3.5 Z" fill="none" stroke="#4a7db3" stroke-width="0.8"/><path d="M4.5 3.8 V8.8" stroke="#c4e2fb" stroke-width="1"/><path d="M0.5 8.8 L2.5 6.8 H9.5 L7.5 8.8 Z" fill="#d4ebfc"/><path d="M7.5 8.8 L9.5 6.8 V13.8 L7.5 15.8 Z" fill="#5f95c9"/><rect x="0.5" y="8.8" width="7" height="7" fill="#92c3ee"/><path d="M0.5 8.8 L2.5 6.8 H9.5 V13.8 L7.5 15.8 H0.5 Z" fill="none" stroke="#4a7db3" stroke-width="0.8"/><path d="M1.5 9.8 V14.8" stroke="#c4e2fb" stroke-width="1"/><path d="M7.5 8.8 L9.5 6.8 H16.5 L14.5 8.8 Z" fill="#d4ebfc"/><path d="M14.5 8.8 L16.5 6.8 V13.8 L14.5 15.8 Z" fill="#5f95c9"/><rect x="7.5" y="8.8" width="7" height="7" fill="#92c3ee"/><path d="M7.5 8.8 L9.5 6.8 H16.5 V13.8 L14.5 15.8 H7.5 Z" fill="none" stroke="#4a7db3" stroke-width="0.8"/><path d="M8.5 9.8 V14.8" stroke="#c4e2fb" stroke-width="1"/></svg>
<svg class="a" style="left:786px;top:328px;" width="17" height="16" viewBox="0 0 17 16"><rect x="0.4" y="3" width="8" height="7" rx="1.5" fill="#d45c5c" stroke="#b84848" stroke-width="0.6"/><rect x="1.5" y="4" width="3" height="2.5" fill="#f09898"/><path d="M9.3 14 L12.6 3.5 L15.8 14 Q12.6 15.6 9.3 14 Z" fill="#7eb2de" stroke="#5a8ec0" stroke-width="0.6"/><path d="M12.6 4.5 L11 13.5" stroke="#c8e2f8" stroke-width="1"/><path d="M2.6 9.4 L5.2 8.2 L7.4 11 L9.2 9.6 L9.6 14.8 L4.6 14.4 L6.2 12.8 Z" fill="#98e488" stroke="#58a848" stroke-width="0.7" stroke-linejoin="round"/></svg>
<div class="a t" style="top:330px;font-size:12px;color:#000;letter-spacing:-0.574px;left:253px;">Refresh</div>
<div class="a" style="left:298px;top:326px;width:1px;height:19px;background:#6f6f6f"></div>
<div class="a t" style="top:330px;font-size:12px;color:#000;letter-spacing:-0.115px;left:325px;">Add</div>
<div class="a t" style="top:330px;font-size:12px;color:#b8a8a8;letter-spacing:-0.668px;left:376px;">Edit</div>
<div class="a t" style="top:330px;font-size:12px;color:#b0a8b0;letter-spacing:-0.284px;left:423px;">Assign Images</div>
<div class="a" style="left:505px;top:326px;width:1px;height:19px;background:#6f6f6f"></div>
<div class="a t" style="top:330px;font-size:12px;color:#b0a8b0;letter-spacing:-0.448px;left:533px;">Delete</div>
<div class="a" style="left:571px;top:326px;width:1px;height:19px;background:#6f6f6f"></div>
<div class="a t" style="top:330px;font-size:12px;color:#000;letter-spacing:-0.046px;left:599px;">Product Combinations Generator</div>
<div class="a" style="left:779px;top:326px;width:1px;height:19px;background:#6f6f6f"></div>
<div class="a t" style="top:330px;font-size:12px;color:#000;letter-spacing:-0.211px;left:806px;">Mass Combination</div>
<div class="a" style="left:806px;top:341px;width:11px;height:1px;background:#000"></div>
<div class="a" style="left:229px;top:348px;width:680px;height:1px;background:#8d8d8d"></div>
<div class="a" style="left:229px;top:348px;width:1px;height:93px;background:#a0a0a0"></div>
<div class="a" style="left:241px;top:349px;width:1px;height:19px;background:#e2e2e2"></div>
<div class="a" style="left:307px;top:349px;width:1px;height:19px;background:#e2e2e2"></div>
<div class="a" style="left:417px;top:349px;width:1px;height:19px;background:#e2e2e2"></div>
<div class="a" style="left:523px;top:349px;width:1px;height:19px;background:#e2e2e2"></div>
<div class="a" style="left:622px;top:349px;width:1px;height:19px;background:#e2e2e2"></div>
<div class="a" style="left:697px;top:349px;width:1px;height:19px;background:#e2e2e2"></div>
<div class="a" style="left:778px;top:349px;width:1px;height:19px;background:#e2e2e2"></div>
<div class="a" style="left:845px;top:349px;width:1px;height:19px;background:#e2e2e2"></div>
<div class="a" style="left:900px;top:349px;width:1px;height:19px;background:#e2e2e2"></div>
<div class="a" style="left:230px;top:368px;width:679px;height:18px;background:#e9edf2"></div>
<div class="a" style="left:230px;top:368px;width:11px;height:18px;background:#f0f0f0"></div>
<div class="a" style="left:230px;top:368px;width:1px;height:17px;background:#ffffff"></div>
<div class="a t" style="top:371px;font-size:11px;color:#000;letter-spacing:-0.292px;right:605px;text-align:right;">273713</div>
<div class="a t" style="top:371px;font-size:11px;color:#000;letter-spacing:-0.484px;left:309px;">РАЗМЕР : S</div>
<div class="a t" style="top:371px;font-size:11px;color:#000;left:421px;">1286</div>
<div class="a t" style="top:371px;font-size:11px;color:#000;letter-spacing:-0.202px;left:526px;">2000000008745</div>
<div class="a t" style="top:371px;font-size:11px;color:#000;letter-spacing:-0.055px;right:134px;text-align:right;">0,000000</div>
<div class="a t" style="top:371px;font-size:11px;color:#000;left:820px;width:23px;overflow:hidden;">0,0</div>
<div class="a t" style="top:371px;font-size:11px;color:#000;right:12px;text-align:right;">3</div>
<div class="a" style="left:230px;top:386px;width:679px;height:18px;background:#fff"></div>
<div class="a" style="left:230px;top:386px;width:11px;height:18px;background:#f0f0f0"></div>
<div class="a" style="left:230px;top:385px;width:11px;height:1px;background:#a0a0a0"></div>
<div class="a" style="left:230px;top:386px;width:11px;height:1px;background:#ffffff"></div>
<div class="a" style="left:230px;top:386px;width:1px;height:17px;background:#ffffff"></div>
<div class="a t" style="top:389px;font-size:11px;color:#000;letter-spacing:-0.292px;right:605px;text-align:right;">273714</div>
<div class="a t" style="top:389px;font-size:11px;color:#000;letter-spacing:-0.463px;left:309px;">РАЗМЕР : L</div>
<div class="a t" style="top:389px;font-size:11px;color:#000;left:421px;">1286</div>
<div class="a t" style="top:389px;font-size:11px;color:#000;letter-spacing:-0.202px;left:526px;">2000000008745</div>
<div class="a t" style="top:389px;font-size:11px;color:#000;letter-spacing:-0.055px;right:134px;text-align:right;">0,000000</div>
<div class="a t" style="top:389px;font-size:11px;color:#000;left:820px;width:23px;overflow:hidden;">0,0</div>
<div class="a t" style="top:389px;font-size:11px;color:#000;right:12px;text-align:right;">3</div>
<div class="a" style="left:230px;top:404px;width:679px;height:18px;background:#e9edf2"></div>
<div class="a" style="left:230px;top:404px;width:11px;height:18px;background:#f0f0f0"></div>
<div class="a" style="left:230px;top:403px;width:11px;height:1px;background:#a0a0a0"></div>
<div class="a" style="left:230px;top:404px;width:11px;height:1px;background:#ffffff"></div>
<div class="a" style="left:230px;top:404px;width:1px;height:17px;background:#ffffff"></div>
<div class="a t" style="top:407px;font-size:11px;color:#000;letter-spacing:-0.292px;right:605px;text-align:right;">273712</div>
<div class="a t" style="top:407px;font-size:11px;color:#000;letter-spacing:-0.466px;left:309px;">РАЗМЕР : M</div>
<div class="a t" style="top:407px;font-size:11px;color:#000;left:421px;">1286</div>
<div class="a t" style="top:407px;font-size:11px;color:#000;letter-spacing:-0.202px;left:526px;">2000000008745</div>
<div class="a t" style="top:407px;font-size:11px;color:#000;letter-spacing:-0.055px;right:134px;text-align:right;">0,000000</div>
<div class="a t" style="top:407px;font-size:11px;color:#000;left:820px;width:23px;overflow:hidden;">0,0</div>
<div class="a t" style="top:407px;font-size:11px;color:#000;right:12px;text-align:right;">4</div>
<div class="a" style="left:230px;top:422px;width:679px;height:18px;background:#fff"></div>
<div class="a" style="left:230px;top:422px;width:11px;height:18px;background:#f0f0f0"></div>
<div class="a" style="left:230px;top:421px;width:11px;height:1px;background:#a0a0a0"></div>
<div class="a" style="left:230px;top:422px;width:11px;height:1px;background:#ffffff"></div>
<div class="a" style="left:230px;top:422px;width:1px;height:17px;background:#ffffff"></div>
<div class="a t" style="top:425px;font-size:11px;color:#000;letter-spacing:-0.292px;right:605px;text-align:right;">273715</div>
<div class="a t" style="top:425px;font-size:11px;color:#000;letter-spacing:-0.588px;left:309px;">РАЗМЕР : XL</div>
<div class="a t" style="top:425px;font-size:11px;color:#000;left:421px;">1286</div>
<div class="a t" style="top:425px;font-size:11px;color:#000;letter-spacing:-0.202px;left:526px;">2000000008745</div>
<div class="a t" style="top:425px;font-size:11px;color:#000;letter-spacing:-0.055px;right:134px;text-align:right;">0,000000</div>
<div class="a t" style="top:425px;font-size:11px;color:#000;left:820px;width:23px;overflow:hidden;">0,0</div>
<div class="a t" style="top:425px;font-size:11px;color:#000;right:12px;text-align:right;">4</div>
<div class="a" style="left:241px;top:368px;width:1px;height:72px;background:#a0a0a0"></div>
<div class="a" style="left:307px;top:368px;width:1px;height:72px;background:#a0a0a0"></div>
<div class="a" style="left:417px;top:368px;width:1px;height:72px;background:#a0a0a0"></div>
<div class="a" style="left:523px;top:368px;width:1px;height:72px;background:#a0a0a0"></div>
<div class="a" style="left:622px;top:368px;width:1px;height:72px;background:#a0a0a0"></div>
<div class="a" style="left:697px;top:368px;width:1px;height:72px;background:#a0a0a0"></div>
<div class="a" style="left:778px;top:368px;width:1px;height:72px;background:#a0a0a0"></div>
<div class="a" style="left:845px;top:368px;width:1px;height:72px;background:#a0a0a0"></div>
<div class="a" style="left:900px;top:368px;width:1px;height:72px;background:#a0a0a0"></div>
<div class="a" style="left:229px;top:440px;width:680px;height:1px;background:#a0a0a0"></div>
<div class="a" style="left:241px;top:404px;width:668px;height:1px;border-top:1px dotted #000;box-sizing:border-box"></div>
<div class="a" style="left:241px;top:421px;width:668px;height:1px;border-top:1px dotted #000;box-sizing:border-box"></div>
<div class="a" style="left:241px;top:404px;width:1px;height:18px;border-left:1px dotted #000;box-sizing:border-box"></div>
<svg class="a" style="left:233px;top:408px;" width="6" height="10" viewBox="0 0 6 10"><path d="M0.5 0.5 L5.5 5 L0.5 9.5 Z" fill="#000"/></svg>
<svg class="a" style="left:233px;top:354px;" width="7" height="10" viewBox="0 0 7 10"><g fill="#000" shape-rendering="crispEdges"><rect x="0" y="0" width="1" height="1"/><rect x="0" y="4" width="1" height="1"/><rect x="0" y="8" width="1" height="1"/><rect x="2" y="0" width="4" height="1"/><rect x="2" y="2" width="4" height="1"/><rect x="2" y="4" width="4" height="1"/><rect x="2" y="6" width="4" height="1"/><rect x="2" y="8" width="4" height="1"/></g></svg>
<div class="a t" style="top:353px;font-size:11px;color:#000;letter-spacing:-0.253px;left:244px;">Combination</div>
<div class="a t" style="top:353px;font-size:11px;color:#000;letter-spacing:0.100px;left:311px;">Attributes</div>
<svg class="a" style="left:422px;top:351px;" width="14" height="14" viewBox="0 0 14 14"><path d="M1.8 12.2 L11.2 2.8" stroke="#0a3fa8" stroke-width="3.4" stroke-linecap="round"/><path d="M2.2 11.6 L10.6 3.2" stroke="#2b7ae6" stroke-width="1.6" stroke-linecap="round"/><path d="M7.6 6.2 L8.8 5.0" stroke="#b89060" stroke-width="2.6"/><path d="M11.0 3.0 L12.6 1.4" stroke="#cfcfc8" stroke-width="2.6" stroke-linecap="round"/><circle cx="1.0" cy="13.0" r="1.0" fill="#f0b030"/></svg>
<div class="a t" style="top:353px;font-size:11px;color:#000;letter-spacing:-0.198px;left:439px;">Reference</div>
<svg class="a" style="left:528px;top:351px;" width="14" height="14" viewBox="0 0 14 14"><path d="M1.8 12.2 L11.2 2.8" stroke="#0a3fa8" stroke-width="3.4" stroke-linecap="round"/><path d="M2.2 11.6 L10.6 3.2" stroke="#2b7ae6" stroke-width="1.6" stroke-linecap="round"/><path d="M7.6 6.2 L8.8 5.0" stroke="#b89060" stroke-width="2.6"/><path d="M11.0 3.0 L12.6 1.4" stroke="#cfcfc8" stroke-width="2.6" stroke-linecap="round"/><circle cx="1.0" cy="13.0" r="1.0" fill="#f0b030"/></svg>
<div class="a t" style="top:353px;font-size:11px;color:#000;letter-spacing:-0.575px;left:544px;">EAN13</div>
<svg class="a" style="left:626px;top:351px;" width="14" height="14" viewBox="0 0 14 14"><path d="M1.8 12.2 L11.2 2.8" stroke="#0a3fa8" stroke-width="3.4" stroke-linecap="round"/><path d="M2.2 11.6 L10.6 3.2" stroke="#2b7ae6" stroke-width="1.6" stroke-linecap="round"/><path d="M7.6 6.2 L8.8 5.0" stroke="#b89060" stroke-width="2.6"/><path d="M11.0 3.0 L12.6 1.4" stroke="#cfcfc8" stroke-width="2.6" stroke-linecap="round"/><circle cx="1.0" cy="13.0" r="1.0" fill="#f0b030"/></svg>
<div class="a t" style="top:353px;font-size:11px;color:#000;letter-spacing:-1.073px;left:642px;">UPC</div>
<svg class="a" style="left:702px;top:351px;" width="14" height="14" viewBox="0 0 14 14"><path d="M1.8 12.2 L11.2 2.8" stroke="#0a3fa8" stroke-width="3.4" stroke-linecap="round"/><path d="M2.2 11.6 L10.6 3.2" stroke="#2b7ae6" stroke-width="1.6" stroke-linecap="round"/><path d="M7.6 6.2 L8.8 5.0" stroke="#b89060" stroke-width="2.6"/><path d="M11.0 3.0 L12.6 1.4" stroke="#cfcfc8" stroke-width="2.6" stroke-linecap="round"/><circle cx="1.0" cy="13.0" r="1.0" fill="#f0b030"/></svg>
<div class="a t" style="top:353px;font-size:11px;color:#000;letter-spacing:-0.462px;left:719px;">Wholesale P</div>
<svg class="a" style="left:783px;top:351px;" width="14" height="14" viewBox="0 0 14 14"><path d="M1.8 12.2 L11.2 2.8" stroke="#0a3fa8" stroke-width="3.4" stroke-linecap="round"/><path d="M2.2 11.6 L10.6 3.2" stroke="#2b7ae6" stroke-width="1.6" stroke-linecap="round"/><path d="M7.6 6.2 L8.8 5.0" stroke="#b89060" stroke-width="2.6"/><path d="M11.0 3.0 L12.6 1.4" stroke="#cfcfc8" stroke-width="2.6" stroke-linecap="round"/><circle cx="1.0" cy="13.0" r="1.0" fill="#f0b030"/></svg>
<div class="a t" style="top:353px;font-size:11px;color:#000;letter-spacing:-0.072px;left:800px;">Impact</div>
<svg class="a" style="left:850px;top:351px;" width="14" height="14" viewBox="0 0 14 14"><path d="M1.8 12.2 L11.2 2.8" stroke="#0a3fa8" stroke-width="3.4" stroke-linecap="round"/><path d="M2.2 11.6 L10.6 3.2" stroke="#2b7ae6" stroke-width="1.6" stroke-linecap="round"/><path d="M7.6 6.2 L8.8 5.0" stroke="#b89060" stroke-width="2.6"/><path d="M11.0 3.0 L12.6 1.4" stroke="#cfcfc8" stroke-width="2.6" stroke-linecap="round"/><circle cx="1.0" cy="13.0" r="1.0" fill="#f0b030"/></svg>
<div class="a t" style="top:353px;font-size:11px;color:#000;letter-spacing:-0.344px;left:866px;">Qu</div>
<svg class="a" style="left:904px;top:351px;" width="5" height="14" viewBox="0 0 5 14"><path d="M1.8 12.2 L11.2 2.8" stroke="#0a3fa8" stroke-width="3.4" stroke-linecap="round"/><path d="M2.2 11.6 L10.6 3.2" stroke="#2b7ae6" stroke-width="1.6" stroke-linecap="round"/><path d="M7.6 6.2 L8.8 5.0" stroke="#b89060" stroke-width="2.6"/><path d="M11.0 3.0 L12.6 1.4" stroke="#cfcfc8" stroke-width="2.6" stroke-linecap="round"/><circle cx="1.0" cy="13.0" r="1.0" fill="#f0b030"/></svg>
<svg class="a" style="left:887px;top:354px;" width="8" height="8" viewBox="0 0 8 8"><path d="M4 0.5 L7.5 7.5 H0.5 Z" fill="none" stroke="#9a9a9a"/></svg>
<svg class="a" style="left:0;top:0" width="909" height="558" viewBox="0 0 909 558"><rect x="622" y="17" width="82" height="65" fill="none" stroke="#ff0000" stroke-width="6" stroke-linejoin="round"/><rect x="839" y="339" width="66" height="114" fill="none" stroke="#ff0000" stroke-width="6" stroke-linejoin="round"/><line x1="615" y1="100" x2="396.6" y2="330.9" stroke="#4a86e8" stroke-width="8" stroke-linecap="round"/><path d="M370 359.3 L384.4 319.7 L408.8 342.1 Z" fill="#4a86e8"/><line x1="718" y1="103.5" x2="842.1" y2="288.65" stroke="#4a86e8" stroke-width="8" stroke-linecap="round"/><path d="M864.4 320.5 L855.6 279.3 L828.6 298 Z" fill="#4a86e8"/></svg></body></html>
